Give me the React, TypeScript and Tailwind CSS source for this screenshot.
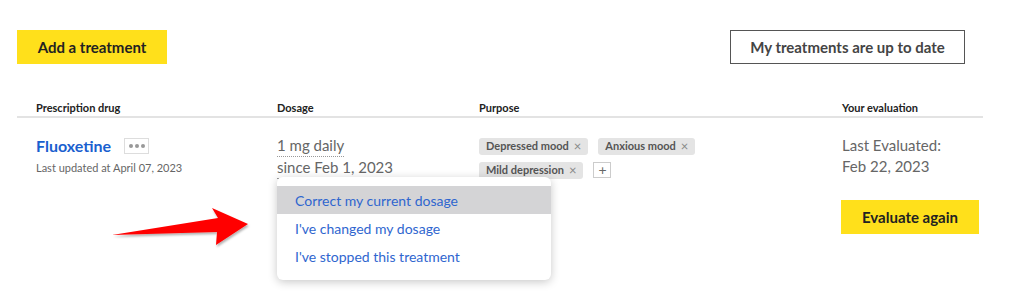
const font = { fontFamily: 'Lato, "Noto Sans", sans-serif' };

const Tag = ({ label }: { label: string }) => (
  <span className="inline-flex h-[17px] items-center gap-[5px] rounded-[3px] bg-[#e4e4e4] px-[7px] text-[11px] font-bold text-[#555]">
    {label}
    <span className="text-[13px] font-normal leading-none text-[#888]">×</span>
  </span>
);

export default function App() {
  return (
    <div className="relative h-[292px] w-[1024px] overflow-hidden bg-white" style={font}>
      {/* top actions */}
      <div className="flex items-center justify-between pl-[17px] pr-[59px] pt-[30px]">
        <button className="h-[34px] w-[150px] bg-[#ffe01b] text-[15px] font-bold text-[#222]">
          Add a treatment
        </button>
        <button className="h-[34px] w-[235px] border border-[#555] bg-white text-[15px] font-bold text-[#444]">
          My treatments are up to date
        </button>
      </div>

      {/* table */}
      <div className="ml-[17px] mr-[41px] mt-[37px]">
        <div className="grid grid-cols-[241px_202px_363px_1fr] border-b-2 border-[#e3e3e3] pb-[1px] pl-[19px] text-[11px] font-bold leading-[14px] text-[#222]">
          <div>Prescription drug</div>
          <div>Dosage</div>
          <div>Purpose</div>
          <div>Your evaluation</div>
        </div>

        <div className="grid grid-cols-[241px_202px_363px_1fr] pl-[19px] pt-[18px]">
          <div>
            <div className="flex items-center gap-[13px]">
              <span className="text-[16px] font-bold leading-[20px] text-[#1a5fcf]">Fluoxetine</span>
              <span className="flex h-[16px] w-[25px] items-center justify-center gap-[2px] border border-[#ddd]">
                <span className="h-[4px] w-[4px] rounded-full bg-[#999]" />
                <span className="h-[4px] w-[4px] rounded-full bg-[#999]" />
                <span className="h-[4px] w-[4px] rounded-full bg-[#999]" />
              </span>
            </div>
            <div className="mt-[4px] text-[11px] text-[#666]">Last updated at April 07, 2023</div>
          </div>

          <div className="relative -mt-[1px] text-[15px] leading-[21px] text-[#666]">
            <div className="inline-block border-b border-dotted border-[#999]">1 mg daily</div>
            <div className="block w-fit border-b border-dotted border-[#999]">since Feb 1, 2023</div>
            <div className="absolute left-0 top-[42px] z-10 w-[274px] rounded-md bg-white py-[9px] text-[14px] text-[#2f66cf] shadow-[0_2px_10px_rgba(0,0,0,0.22)]">
              <div className="flex h-[28px] items-center bg-[#d4d4d6] px-[18px]">Correct my current dosage</div>
              <div className="flex h-[28px] items-center px-[18px]">I've changed my dosage</div>
              <div className="flex h-[29px] items-center px-[18px]">I've stopped this treatment</div>
            </div>
          </div>

          <div className="mt-[2px] flex flex-wrap content-start gap-x-[10px] gap-y-[7px] pr-[140px]">
            <Tag label="Depressed mood" />
            <Tag label="Anxious mood" />
            <Tag label="Mild depression" />
            <span className="flex h-[16px] w-[18px] items-center justify-center border border-[#ccc] text-[14px] leading-none text-[#666]">
              +
            </span>
          </div>

          <div className="-mt-[1px]">
            <div className="text-[15px] leading-[21px] text-[#666]">
              <div>Last Evaluated:</div>
              <div>Feb 22, 2023</div>
            </div>
            <button className="mt-[23px] h-[34px] w-[138px] -ml-[1px] bg-[#ffe01b] text-[15px] font-bold text-[#222]">
              Evaluate again
            </button>
          </div>
        </div>
      </div>

      {/* annotation arrow */}
      <svg className="absolute left-0 top-0" width="1024" height="292" style={{ pointerEvents: 'none' }}>
        <defs>
          <filter id="sh" x="-10%" y="-30%" width="130%" height="160%">
            <feDropShadow dx="1" dy="2" stdDeviation="1.2" floodColor="#000" floodOpacity="0.3" />
          </filter>
        </defs>
        <polygon
          points="112,235 218,218 212,208 248,224 216,245 217,232"
          fill="#ff0000"
          filter="url(#sh)"
        />
      </svg>
    </div>
  );
}
